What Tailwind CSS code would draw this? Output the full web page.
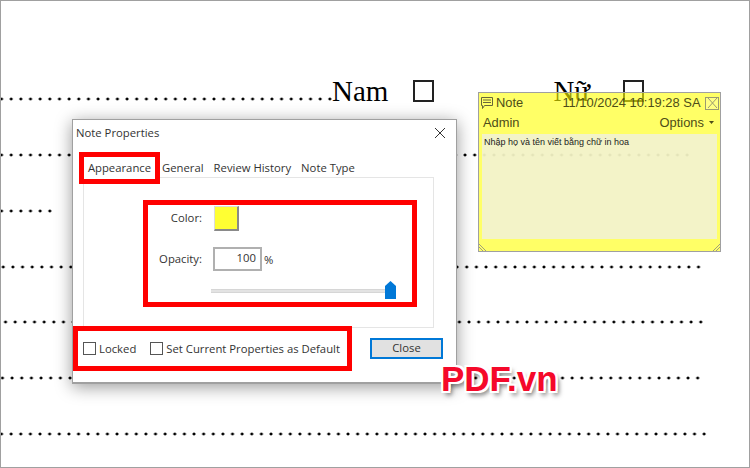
<!DOCTYPE html>
<html lang="en">
<head>
    <meta charset="UTF-8">
    <title>Note Properties</title>
    <script src="https://cdn.jsdelivr.net/npm/@tailwindcss/browser@4"></script>
</head>
<body class="bg-white">
<div class="relative w-[750px] h-[468px] overflow-hidden bg-white border border-[#a0a0a0] font-['Liberation_Serif',serif] text-black">

    <!-- Document underneath -->
    <div class="flex items-center h-[36px] mt-[72px] text-[29px] leading-none">
        <span class="ml-[331px]">Nam</span>
        <span class="ml-[25px] w-[21px] h-[22px] border-2 border-[#222]"></span>
        <span class="ml-[119px]">Nữ</span>
        <span class="ml-[33px] w-[21px] h-[22px] border-2 border-[#222]"></span>
    </div>
    <div class="flex flex-col">
        <div class="h-[4px] mt-[-12px] w-[332px] bg-[radial-gradient(circle,#000_1.3px,transparent_1.7px)] bg-[length:9.67px_4px] bg-[position:-4.3px_0]"></div>
        <div class="h-[4px] mt-[52px] w-[691px] bg-[radial-gradient(circle,#000_1.3px,transparent_1.7px)] bg-[length:9.67px_4px] bg-[position:-4.3px_0]"></div>
        <div class="h-[4px] mt-[52px] w-[51px] bg-[radial-gradient(circle,#000_1.3px,transparent_1.7px)] bg-[length:9.67px_4px] bg-[position:-4.3px_0]"></div>
        <div class="h-[4px] mt-[52px] w-[701px] bg-[radial-gradient(circle,#000_1.3px,transparent_1.7px)] bg-[length:9.67px_4px] bg-[position:-2.6px_0]"></div>
        <div class="h-[4px] mt-[51px] w-[705px] bg-[radial-gradient(circle,#000_1.3px,transparent_1.7px)] bg-[length:9.67px_4px] bg-[position:-0.3px_0]"></div>
        <div class="h-[4px] mt-[52px] w-[701px] bg-[radial-gradient(circle,#000_1.3px,transparent_1.7px)] bg-[length:9.67px_4px] bg-[position:-3.4px_0]"></div>
        <div class="h-[4px] mt-[52px] w-[706px] bg-[radial-gradient(circle,#000_1.3px,transparent_1.7px)] bg-[length:9.63px_4px] bg-[position:-4.3px_0]"></div>
    </div>

    <!-- Sticky note -->
    <div class="absolute left-[477px] top-[91px] w-[243px] h-[160px] bg-[#ffff00]/60 border border-[#a0a0a0] font-['Liberation_Sans',sans-serif] text-[12.9px] text-[#4d4d18] flex flex-col">
        <div class="flex items-center h-[16px] mt-[2px] pl-[1px] pr-[1px]">
            <svg class="w-[14px] h-[12px]" viewBox="0 0 14 12" fill="none" stroke="#66663a"><path d="M1.5 .5h11v8h-8l-2 3v-3h-1zM3 3h8M3 5.5h8"/></svg>
            <span class="ml-[2px]">Note</span>
            <span class="ml-auto mr-[4.5px] whitespace-nowrap">11/10/2024 10:19:28 SA</span>
            <span class="w-[14px] h-[13px] border border-[#9a9a70] bg-white/20 flex items-center justify-center">
                <svg class="w-[11px] h-[10px]" viewBox="0 0 11 10" stroke="#9a9a70"><path d="M1 0l9 10M10 0L1 10"/></svg>
            </span>
        </div>
        <div class="flex items-center justify-between h-[20px] mt-[2px] pl-[4px] pr-[6px]">
            <span>Admin</span>
            <span class="flex items-center">Options<svg class="ml-[5px] w-[5px] h-[3px]" viewBox="0 0 5 3" fill="#4d4d18"><path d="M0 0h5L2.5 3z"/></svg></span>
        </div>
        <div class="mx-[3px] mt-[1px] h-[105px] bg-[#f1f1d9]/85 px-[2px] py-[3px] text-[9px] leading-[11px] text-[#222]">Nhập họ và tên viết bằng chữ in hoa</div>
        <!-- resize corners -->
        <svg class="absolute left-0 bottom-0 w-[8px] h-[8px]" viewBox="0 0 8 8" stroke="#a0a07a" fill="none"><path d="M0 1l7 7M0 4l4 4"/></svg>
        <svg class="absolute right-0 bottom-0 w-[8px] h-[8px]" viewBox="0 0 8 8" stroke="#a0a07a" fill="none"><path d="M8 1L1 8M8 4L4 8"/></svg>
    </div>

    <!-- Note Properties dialog -->
    <div class="absolute left-[71px] top-[118px] w-[385px] h-[265px] bg-white border border-[#a0a0a0] border-b-2 shadow-[0_3px_16px_rgba(0,0,0,0.4)] font-['Open_Sans',sans-serif] text-[11.3px] text-[#333]">
        <div class="flex items-center justify-between h-[25px] pl-[3px] pr-[11px] pt-[1px]">
            <span>Note Properties</span>
            <svg class="w-[10px] h-[10px]" viewBox="0 0 10 10" stroke="#333"><path d="M0 0l10 10M10 0L0 10"/></svg>
        </div>

        <!-- Tabs -->
        <div class="relative z-10 flex items-center mt-[7px] ml-[6px] w-max">
            <span class="flex items-center justify-center w-[81px] h-[32px] border-[5px] border-[#ff0000] bg-white">Appearance</span>
            <span class="ml-[2px]">General</span>
            <span class="ml-[10px]">Review History</span>
            <span class="ml-[10px]">Note Type</span>
        </div>

        <!-- Tab panel -->
        <div class="ml-[10px] mt-[-7px] w-[351px] h-[151px] border border-[#e5e5e5] pt-[22px] pl-[59px]">
            <div class="w-[274px] h-[107px] border-[5px] border-[#ff0000]">
                <div class="flex items-center mt-[1px]">
                    <span class="w-[54px] text-right">Color:</span>
                    <span class="ml-[12px] w-[25px] h-[25px] bg-[#ffff33] border border-[#dcdcdc] border-r-2 border-b-2 border-r-[#8a8a8a] border-b-[#8a8a8a]"></span>
                </div>
                <div class="flex items-center mt-[16px]">
                    <span class="w-[54px] text-right pt-[1px]">Opacity:</span>
                    <span class="ml-[11px] w-[49px] h-[24px] border-2 border-[#b0b0b0] text-right pr-[4px] leading-[18px]">100</span>
                    <span class="ml-[2px] pt-[2px]">%</span>
                </div>
                <div class="flex items-center ml-[63px] mt-[10px] h-[18px]">
                    <span class="w-[174px] h-[4px] mt-[2px] bg-[#e3e3e3] border-y border-[#d6d6d6]"></span>
                    <svg class="w-[11px] h-[18px]" viewBox="0 0 11 18" fill="#0078d7"><path d="M5.5 0L11 5v13H0V5z"/></svg>
                </div>
            </div>
        </div>

        <!-- Bottom row -->
        <div class="flex items-center mt-[-2px]">
            <div class="flex items-center w-[279px] h-[45px] border-[5px] border-[#ff0000] pl-[5px]">
                <span class="w-[13px] h-[13px] border border-[#555]"></span>
                <span class="ml-[3px] pt-[1px]">Locked</span>
                <span class="ml-[14px] w-[13px] h-[13px] border border-[#555]"></span>
                <span class="ml-[3px] pt-[1px] whitespace-nowrap">Set Current Properties as Default</span>
            </div>
            <span class="flex items-center justify-center ml-[18px] w-[73px] h-[21px] bg-[#e1e1e1] border-2 border-[#0078d7]">Close</span>
        </div>
    </div>

    <!-- Watermark -->
    <span class="absolute left-[440px] top-[358px] font-['Liberation_Sans',sans-serif] font-bold text-[35px] leading-[40px] text-[#f5092a] [text-shadow:2px_0_0_#fff,-2px_0_0_#fff,0_2px_0_#fff,0_-2px_0_#fff,2px_2px_0_#fff,-2px_2px_0_#fff,2px_-2px_0_#fff,-2px_-2px_0_#fff,3px_4px_5px_rgba(0,0,0,0.6)]">PDF.vn</span>
</div>
</body>
</html>
